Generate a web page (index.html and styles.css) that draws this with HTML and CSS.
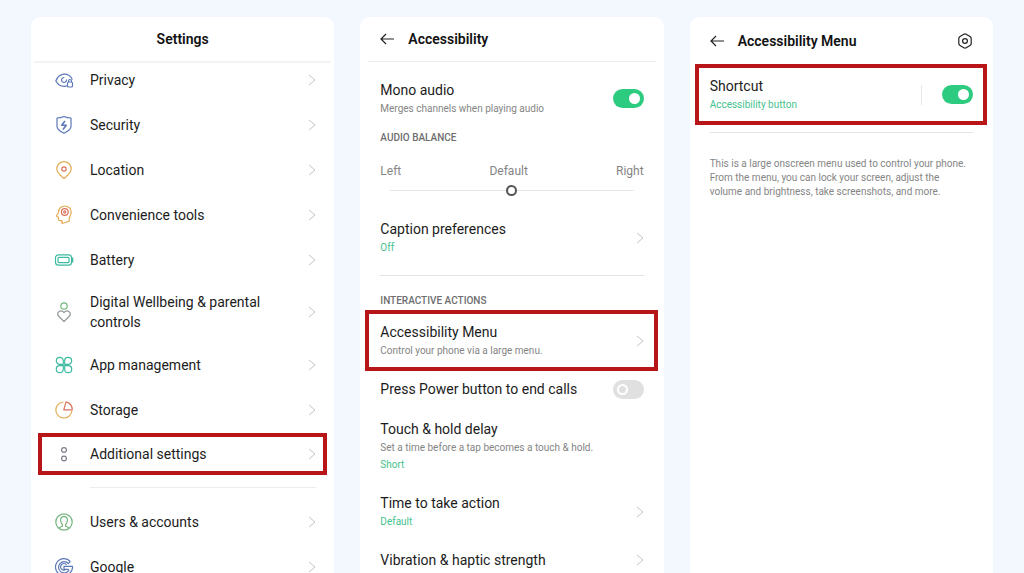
FILE: index.html
```html
<!DOCTYPE html>
<html lang="en">
<head>
    <meta charset="UTF-8">
    <meta name="viewport" content="width=device-width, initial-scale=1.0">
    <title>Accessibility Menu</title>
    <link rel="stylesheet" href="styles.css">
</head>
<body>
    <svg class="sprite" aria-hidden="true">
        <symbol id="chevron" viewBox="0 0 8 14">
            <path d="M1 2l6 5-6 5" fill="none" stroke="currentColor"/>
        </symbol>
        <symbol id="arrow" viewBox="0 0 14 14">
            <path d="M6 2L1 7l5 5M1 7h13" fill="none" stroke="currentColor" stroke-width="1.2"/>
        </symbol>
    </svg>

    <main class="screens">
        <!-- Settings -->
        <section class="screen">
            <header class="bar bar-center">
                <h1>Settings</h1>
            </header>
            <nav class="menu">
                <a class="item" href="#privacy">
                    <svg class="icon blue" viewBox="0 0 24 24"><path d="M15 17.800c-1 .4-2 .5-3 .5-4 0-6.500-2.300-8.200-5.300C5.500 9 8.200 6.200 12.300 6.200c3.700 0 6.500 2 8.100 5.300"/><path d="M14.500 11.500a2.500 2.500 0 1 1-2.200-2"/><rect x="15.500" y="14" width="5" height="5" rx="1.300"/><path d="M16.500 14v-1a1.500 1.500 0 0 1 3 0v1"/></svg>
                    <span class="name">Privacy</span>
                    <svg class="chevron"><use href="#chevron"/></svg>
                </a>
                <a class="item" href="#security">
                    <svg class="icon blue" viewBox="0 0 24 24"><path d="M12 3.500c2.300 1.100 4.500 1.500 7 1.500v8.500c0 3-3.500 5-7 6.700-3.500-1.700-7-3.700-7-6.700V5c2.500 0 4.700-.4 7-1.500z"/><path d="M13 8l-3.300 4.200h4.600L11 16.500" stroke-width="1.600"/></svg>
                    <span class="name">Security</span>
                    <svg class="chevron"><use href="#chevron"/></svg>
                </a>
                <a class="item" href="#location">
                    <svg class="icon amber" viewBox="0 0 24 24"><path d="M12 20.500C9 17.800 4.800 15 4.800 10.800a7.200 7.200 0 0 1 14.400 0c0 4.200-4.200 7-7.200 9.700z"/><circle class="red" cx="12" cy="11" r="2.200"/></svg>
                    <span class="name">Location</span>
                    <svg class="chevron"><use href="#chevron"/></svg>
                </a>
                <a class="item" href="#tools">
                    <svg class="icon amber" viewBox="0 0 24 24"><path d="M10 20.500v-2.800H8c-1 0-1.500-.5-1.500-1.500v-2L4.300 13l2.200-3.500C6.500 5.500 9.200 3 12.800 3c3.800 0 6.400 2.700 6.400 6.200 0 3-1.700 4.300-2 6.300v2.800z"/><g class="red"><circle cx="12.800" cy="9" r="3.400"/><circle cx="12.800" cy="9" r="1.100"/></g></svg>
                    <span class="name">Convenience tools</span>
                    <svg class="chevron"><use href="#chevron"/></svg>
                </a>
                <a class="item" href="#battery">
                    <svg class="icon teal" viewBox="0 0 24 24"><rect x="3.500" y="6.800" width="16" height="10.400" rx="3"/><rect x="6" y="9.300" width="11" height="5.400" rx="1"/><path d="M20.500 9.500v5" stroke-width="1.600"/></svg>
                    <span class="name">Battery</span>
                    <svg class="chevron"><use href="#chevron"/></svg>
                </a>
                <a class="item" href="#wellbeing">
                    <svg class="icon green" viewBox="0 0 24 24"><circle cx="12" cy="6" r="3.200"/><path class="gray" d="M12 21.500l-5.300-5.200c-2.800-3 1.400-7.200 4.300-4.600l1 1 1-1c2.900-2.600 7.100 1.600 4.300 4.600z"/></svg>
                    <span class="name">Digital Wellbeing &amp; parental controls</span>
                    <svg class="chevron"><use href="#chevron"/></svg>
                </a>
                <a class="item" href="#apps">
                    <svg class="icon teal" viewBox="0 0 24 24"><path d="M11.300 11.300H7.800a3.500 3.500 0 1 1 3.500-3.500zM12.700 11.300V7.800a3.500 3.500 0 1 1 3.500 3.500zM11.300 12.700v3.500a3.500 3.500 0 1 1-3.500-3.500zM12.700 12.700h3.500a3.500 3.500 0 1 1-3.500 3.500z"/></svg>
                    <span class="name">App management</span>
                    <svg class="chevron"><use href="#chevron"/></svg>
                </a>
                <a class="item" href="#storage">
                    <svg class="icon amber" viewBox="0 0 24 24"><path d="M11.500 4a8 8 0 1 0 8.300 9"/><path class="red" d="M14 3.800L11.800 11.800h8.500c0-3.800-2.600-7-6.300-8z"/></svg>
                    <span class="name">Storage</span>
                    <svg class="chevron"><use href="#chevron"/></svg>
                </a>
                <a class="item marked" href="#additional">
                    <svg class="icon slate" viewBox="0 0 24 24"><circle cx="12" cy="8" r="2.400"/><circle cx="12" cy="16.500" r="2.400"/></svg>
                    <span class="name">Additional settings</span>
                    <svg class="chevron"><use href="#chevron"/></svg>
                </a>
                <hr class="menu-line">
                <a class="item" href="#users">
                    <svg class="icon green" viewBox="0 0 24 24"><circle cx="12" cy="12" r="8.200"/><path d="M7 18.300c.5-1.300 3-1.800 3.500-2.300.4-.7-.2-1.500-.7-2.200C9 12.800 8.600 11.500 8.600 10a3.400 3.400 0 0 1 6.800 0c0 1.500-.4 2.800-1.200 3.800-.5.7-1.100 1.500-.7 2.200.5.500 3 1 3.500 2.300"/></svg>
                    <span class="name">Users &amp; accounts</span>
                    <svg class="chevron"><use href="#chevron"/></svg>
                </a>
                <a class="item" href="#google">
                    <svg class="icon blue" viewBox="0 0 24 24"><path d="M18.300 6.300a8.500 8.500 0 1 0 2.200 5H12v3h4.800M18.300 6.300l-2 2.200a5.600 5.600 0 1 0 .8 6.500M14.500 9.800a3.300 3.300 0 1 0-.5 4.500"/></svg>
                    <span class="name">Google</span>
                    <svg class="chevron"><use href="#chevron"/></svg>
                </a>
            </nav>
        </section>

        <!-- Accessibility -->
        <section class="screen">
            <header class="bar bar-inset">
                <button type="button" class="back" aria-label="Back"><svg><use href="#arrow"/></svg></button>
                <h1>Accessibility</h1>
            </header>
            <div class="content">
                <div class="row">
                    <label class="text" for="mono">
                        <span class="title">Mono audio</span>
                        <span class="sub">Merges channels when playing audio</span>
                    </label>
                    <input type="checkbox" class="toggle" id="mono" checked>
                </div>

                <h2><label for="balance">Audio balance</label></h2>
                <div class="balance">
                    <div class="scale">
                        <span>Left</span>
                        <span>Default</span>
                        <span>Right</span>
                    </div>
                    <input type="range" id="balance" min="0" max="100" value="50">
                </div>

                <a class="row" href="#captions">
                    <span class="text">
                        <span class="title">Caption preferences</span>
                        <span class="sub value">Off</span>
                    </span>
                    <svg class="chevron"><use href="#chevron"/></svg>
                </a>
                <hr class="line">

                <h2>Interactive actions</h2>
                <a class="row marked" href="#accessibility-menu">
                    <span class="text">
                        <span class="title">Accessibility Menu</span>
                        <span class="sub">Control your phone via a large menu.</span>
                    </span>
                    <svg class="chevron"><use href="#chevron"/></svg>
                </a>
                <div class="row power">
                    <label class="text" for="power">
                        <span class="title">Press Power button to end calls</span>
                    </label>
                    <input type="checkbox" class="toggle" id="power">
                </div>
                <a class="row" href="#touch">
                    <span class="text">
                        <span class="title">Touch &amp; hold delay</span>
                        <span class="sub">Set a time before a tap becomes a touch &amp; hold.</span>
                        <span class="sub value">Short</span>
                    </span>
                </a>
                <a class="row" href="#time">
                    <span class="text">
                        <span class="title">Time to take action</span>
                        <span class="sub value">Default</span>
                    </span>
                    <svg class="chevron"><use href="#chevron"/></svg>
                </a>
                <a class="row" href="#vibration">
                    <span class="text">
                        <span class="title">Vibration &amp; haptic strength</span>
                    </span>
                    <svg class="chevron"><use href="#chevron"/></svg>
                </a>
            </div>
        </section>

        <!-- Accessibility Menu -->
        <section class="screen">
            <header class="bar bar-plain">
                <button type="button" class="back" aria-label="Back"><svg><use href="#arrow"/></svg></button>
                <h1>Accessibility Menu</h1>
                <button type="button" class="gear" aria-label="Options">
                    <svg viewBox="0 0 16 16"><path d="M6.800 1.300q1.200-.7 2.400 0l3.800 2.200q1.200.7 1.200 2v5q0 1.300-1.200 2l-3.800 2.200q-1.200.7-2.400 0L3 12.500q-1.200-.7-1.200-2v-5q0-1.300 1.200-2z"/><circle cx="8" cy="8" r="2.400"/></svg>
                </button>
            </header>
            <div class="row marked">
                <label class="text" for="shortcut">
                    <span class="title">Shortcut</span>
                    <span class="sub value">Accessibility button</span>
                </label>
                <span class="split"></span>
                <input type="checkbox" class="toggle" id="shortcut" checked>
            </div>
            <hr class="line">
            <p class="about">This is a large onscreen menu used to control your phone. From the menu, you can lock your screen, adjust the volume and brightness, take screenshots, and more.</p>
        </section>
    </main>
</body>
</html>
```
FILE: styles.css
```css
*,
*::before {
    box-sizing: border-box;
}
body {
    margin: 0;
    height: 100vh;
    overflow: hidden;
    background: #f3f8ff;
    color: #1c1c1c;
    font-family: Roboto, "Liberation Sans", sans-serif;
    font-size: 14px;
    line-height: 20px;
}
h1, h2, p {
    margin: 0;
}
a {
    color: inherit;
    text-decoration: none;
}
.sprite {
    display: none;
}
.screens {
    display: grid;
    grid-template-columns: repeat(3, minmax(0, 1fr));
    gap: 26px;
    height: 100%;
    padding: 17px 31px 0;
}
.screen {
    background: #fff;
    border-radius: 10px 10px 0 0;
    overflow: hidden;
}

/* title bars */
.bar {
    display: flex;
    align-items: center;
    height: 46px;
    padding: 0 20px;
}
.bar h1 {
    flex: 1;
    font-size: 14px;
    font-weight: 600;
    color: #111;
}
.bar-center {
    margin: 0 3px;
    border-bottom: 2px solid #f4f4f4;
    text-align: center;
}
.bar-inset {
    height: 45px;
    margin: 0 8px;
    padding: 0 12px;
    border-bottom: 1px solid #ececec;
}
.bar-plain {
    height: 47px;
}
.back,
.gear {
    display: flex;
    padding: 0;
    border: none;
    background: none;
    color: #222;
    cursor: pointer;
}
.back {
    margin-right: 14px;
}
.back svg {
    width: 14px;
    height: 14px;
}
.gear svg {
    width: 16px;
    height: 16px;
    fill: none;
    stroke: currentColor;
    stroke-width: 1.2;
}

/* settings list */
.menu {
    margin: -6px 7px 0;
}
.item {
    display: flex;
    align-items: center;
    gap: 14px;
    min-height: 45px;
    padding: 10px 11px 10px 14px;
}
.name {
    flex: 1;
}
.menu-line {
    height: 1px;
    margin: 12px 11px 11px 52px;
    border: none;
    background: #ececec;
}
.chevron {
    flex: none;
    width: 8px;
    height: 14px;
    color: #c4c4c4;
}
.icon {
    flex: none;
    width: 24px;
    height: 24px;
    fill: none;
    stroke: currentColor;
    stroke-width: 1.2;
    stroke-linejoin: round;
}
.icon * {
    stroke: currentColor;
}
.blue { color: #5b78b8; }
.amber { color: #e3ac55; }
.red { color: #d9735c; }
.teal { color: #3dbba0; }
.green { color: #74b67c; }
.gray { color: #949c98; }
.slate { color: #7c8088; }

/* preference rows */
.content {
    padding-top: 8px;
}
.row {
    display: flex;
    align-items: center;
    padding: 10px 20px;
}
.text {
    flex: 1;
}
.title,
.sub {
    display: block;
}
.sub {
    font-size: 10px;
    line-height: 17px;
    color: #858585;
}
.value {
    color: #45c28e;
}
h2 {
    padding: 3px 20px 1px;
    font-size: 10px;
    font-weight: 500;
    line-height: 16px;
    text-transform: uppercase;
    color: #6e6e6e;
}
.line {
    height: 1px;
    margin: 9px 20px 14px;
    border: none;
    background: #e4e4e4;
}
.row.marked + .line {
    margin-top: 7px;
}
.power {
    padding-top: 8px;
}
.split {
    width: 1px;
    height: 20px;
    margin-right: 20px;
    background: #e8e8e8;
}
.about {
    padding: 10px 20px;
    font-size: 10px;
    line-height: 14px;
    color: #858585;
}

/* red frames */
.marked {
    border: 4px solid #b81519;
}
.item.marked {
    min-height: 42px;
    margin: 1px 0 2px;
    padding: 5px 7px 5px 10px;
}
.row.marked {
    margin: 0 6px 0 5px;
    padding: 8px 10px 8px 11px;
}

/* balance slider */
.balance {
    padding: 15px 20px 14px;
}
.scale {
    display: flex;
    justify-content: space-between;
    font-size: 12px;
    line-height: 18px;
    color: #858585;
}
#balance {
    display: block;
    width: calc(100% - 20px);
    height: 10px;
    margin: 5px 10px 0;
    appearance: none;
    background: linear-gradient(#e6e6e6, #e6e6e6) center / 100% 1px no-repeat;
}
#balance::-webkit-slider-thumb {
    appearance: none;
    box-sizing: border-box;
    width: 11px;
    height: 11px;
    border: 2px solid #555;
    border-radius: 50%;
    background: #fff;
}

/* switches */
.toggle {
    position: relative;
    flex: none;
    width: 31px;
    height: 19px;
    margin: 0;
    appearance: none;
    border-radius: 10px;
    background: #e0e0e0;
    cursor: pointer;
}
.toggle::before {
    content: "";
    position: absolute;
    top: 4px;
    left: 4px;
    width: 11px;
    height: 11px;
    border: 2px solid #fff;
    border-radius: 50%;
}
.toggle:checked {
    background: #2dcb80;
}
.toggle:checked::before {
    left: 16px;
    background: #fff;
}
```
